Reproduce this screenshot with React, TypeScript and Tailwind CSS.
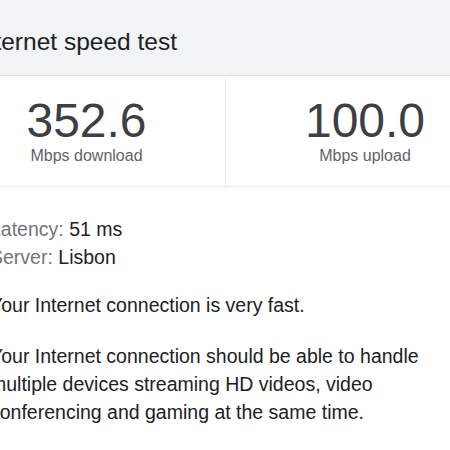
export default function App() {
  return (
    <div className="w-[450px] h-[450px] overflow-hidden bg-white font-['Liberation_Sans',Arial,sans-serif]">
      <div className="ml-[-52px] w-[556px]">
        <div className="h-[76px] bg-[#f1f3f4] border-b border-[#dadce0] pl-[26px] pt-[26px]">
          <h1 className="text-[24.5px] leading-[32px] text-[#202124]">Internet speed test</h1>
        </div>

        <div className="flex border-b border-[#ebebeb]">
          <div className="w-[278px] h-[110px] border-r border-[#ebebeb] flex flex-col items-center pt-[21px]">
            <span className="text-[48px] leading-[48px] text-[#3c4043]">352.6</span>
            <span className="mt-[1px] text-[16px] leading-[20px] text-[#5f6368]">Mbps download</span>
          </div>
          <div className="w-[278px] h-[110px] flex flex-col items-center pt-[21px]">
            <span className="text-[48px] leading-[48px] text-[#3c4043]">100.0</span>
            <span className="mt-[1px] text-[16px] leading-[20px] text-[#5f6368]">Mbps upload</span>
          </div>
        </div>

        <div className="pl-[42px] pr-[42px] pt-[28px] text-[19.5px] text-[#202124]">
          <div className="leading-[28px]">
            <div>
              <span className="text-[#70757a]">Latency: </span>51 ms
            </div>
            <div>
              <span className="text-[#70757a]">Server: </span>Lisbon
            </div>
          </div>
          <p className="mt-[20px] leading-[28px]">Your Internet connection is very fast.</p>
          <p className="mt-[23px] leading-[28px]">
            Your Internet connection should be able to handle multiple devices streaming HD videos, video
            conferencing and gaming at the same time.
          </p>
        </div>
      </div>
    </div>
  );
}
